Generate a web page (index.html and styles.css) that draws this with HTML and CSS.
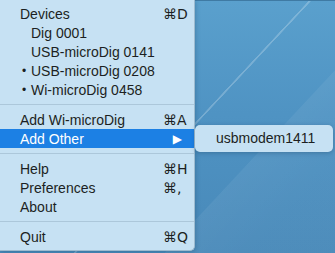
FILE: index.html
```html
<!DOCTYPE html>
<html>
<head>
  <title>microDig menu</title>
  <link rel="stylesheet" href="styles.css">
</head>
<body>
  <div class="desktop">
    <div class="menu">
      <div class="item"><span class="label">Devices</span><span class="key">&#8984;D</span></div>
      <div class="item"><span class="mark"></span><span class="label">Dig 0001</span></div>
      <div class="item"><span class="mark"></span><span class="label">USB-microDig 0141</span></div>
      <div class="item"><span class="mark">&bull;</span><span class="label">USB-microDig 0208</span></div>
      <div class="item"><span class="mark">&bull;</span><span class="label">Wi-microDig 0458</span></div>
      <div class="sep"></div>
      <div class="item"><span class="label">Add Wi-microDig</span><span class="key">&#8984;A</span></div>
      <div class="item active"><span class="label">Add Other</span><span class="arrow">&#9654;</span>
        <div class="submenu">
          <div class="subitem">usbmodem1411</div>
        </div>
      </div>
      <div class="sep"></div>
      <div class="item"><span class="label">Help</span><span class="key">&#8984;H</span></div>
      <div class="item"><span class="label">Preferences</span><span class="key">&#8984;,</span></div>
      <div class="item"><span class="label">About</span></div>
      <div class="sep"></div>
      <div class="item"><span class="label">Quit</span><span class="key">&#8984;Q</span></div>
    </div>
  </div>
</body>
</html>
```

FILE: styles.css
```css
html, body {
    margin: 0;
    height: 100%;
}

body {
    font-family: "Liberation Sans", Arial, sans-serif;
    font-size: 14px;
    color: #1c1f22;
}

.desktop {
    height: 100%;
    border-top: 1px solid #3f7aa3;
    box-sizing: border-box;
    background:
        linear-gradient(133deg, transparent 54.1%, rgba(255, 255, 255, 0.22) 54.2%, rgba(255, 255, 255, 0.22) 54.5%, transparent 54.6%),
        linear-gradient(133deg, transparent 70%, rgba(255, 255, 255, 0.06) 70.2%, rgba(255, 255, 255, 0.03) 85%),
        linear-gradient(180deg, #5aa0cd 0%, #4f93c3 45%, #4889b9 100%);
}

.menu {
    width: 194px;
    padding: 4px 0 4px;
    background: #c6e1f3;
    border-right: 1px solid #9dbbd0;
    border-bottom: 1px solid #9dbbd0;
    border-radius: 0 0 5px 0;
    box-shadow: 1px 1px 4px rgba(20, 50, 80, 0.25);
    margin-top: -1px;
}

.item {
    position: relative;
    display: flex;
    align-items: center;
    height: 19px;
    padding: 0 9px 0 20px;
}

.mark {
    width: 9px;
    padding-left: 2px;
    font-size: 12px;
}

.label {
    flex: 1;
}

.key {
    width: 22px;
    font-family: "DejaVu Sans", sans-serif;
    font-size: 14px;
}

.arrow {
    font-family: "DejaVu Sans", sans-serif;
    font-size: 12px;
    margin-right: 3px;
}

.active {
    background: #1c80e4;
    color: #ffffff;
}

.sep {
    height: 1px;
    margin: 5px 0;
    background: #acc7da;
}

.submenu {
    position: absolute;
    left: 195px;
    top: -4px;
    width: 138px;
    padding: 4px 0;
    background: #c6e1f3;
    border-radius: 5px;
    box-shadow: 0 1px 4px rgba(20, 50, 80, 0.3);
    color: #1c1f22;
}

.subitem {
    height: 19px;
    line-height: 19px;
    padding-left: 21px;
}
```
